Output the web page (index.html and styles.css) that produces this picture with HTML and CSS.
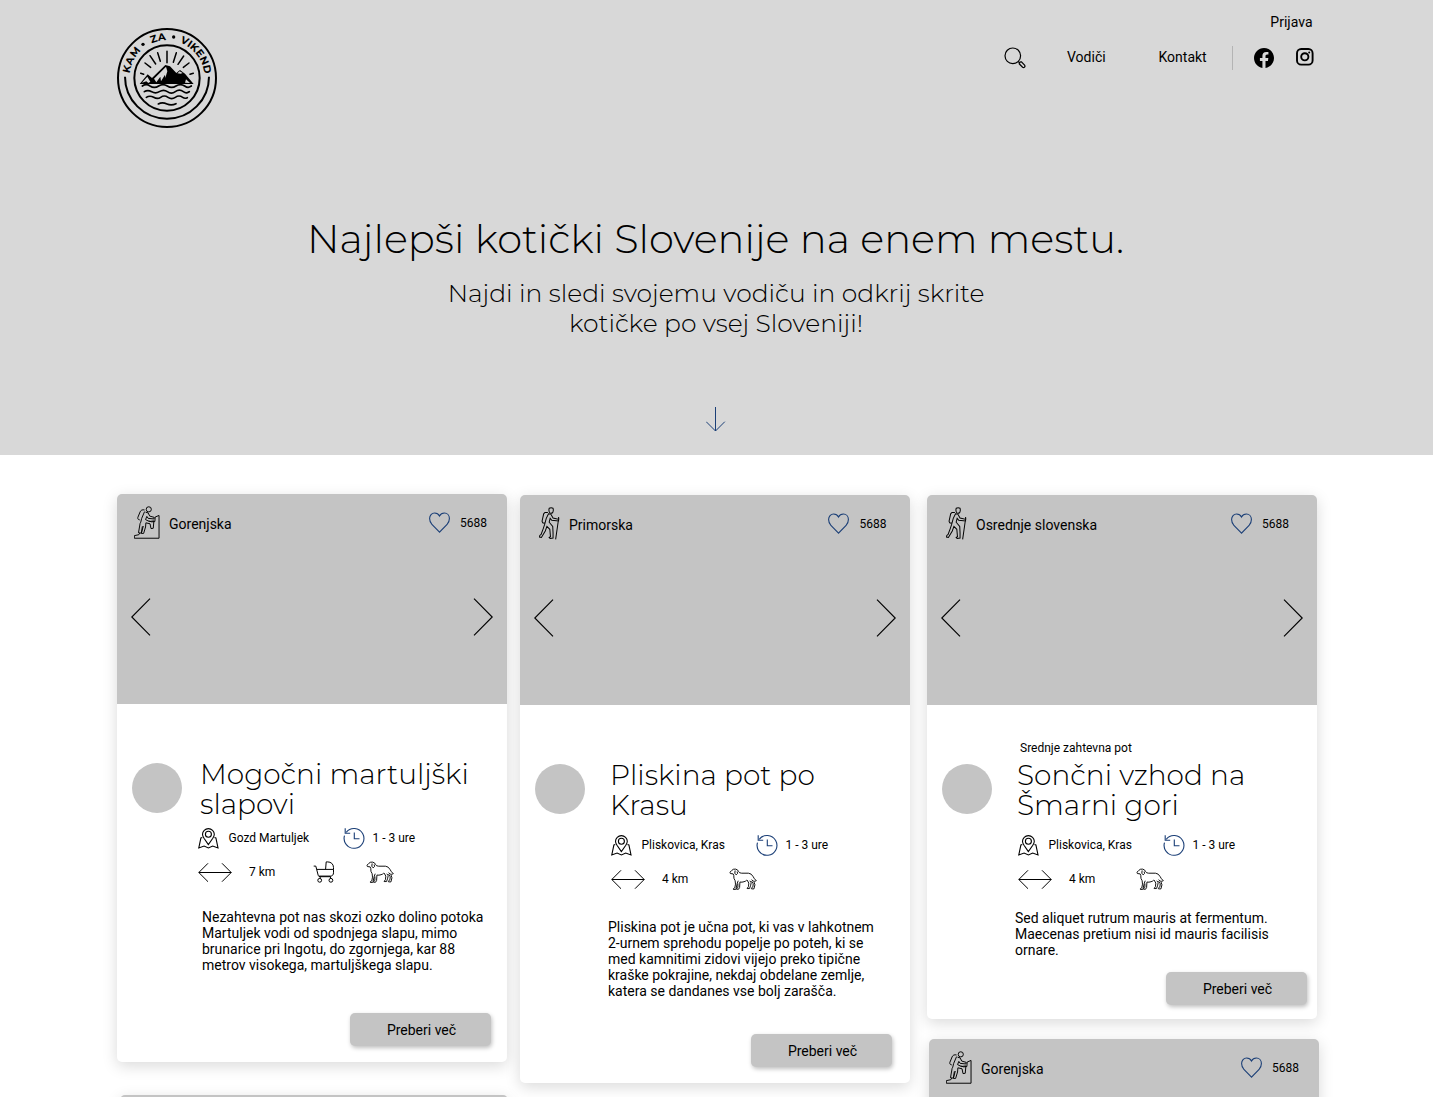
FILE: index.html
```html
<!DOCTYPE html>
<html lang="sl">
<head>
<meta charset="utf-8">
<title>Kam za vikend</title>
<link rel="stylesheet" href="styles.css">
</head>
<body>
<svg class="sprite" aria-hidden="true">
  <symbol id="climber" viewBox="71 61 81 102">
    <circle cx="117" cy="71" r="8"/>
    <path d="M104 73c-7-2-12 1-14 6l-7 17c-1 5 1 7 6 8M104 78l-9 21-3 12-2 4M107 80l8 2 5 10 14 4-1 5-18-2-4-6-4 10 12 6 14-2-2 23-7 1-3-15-13-3-1 13-6 20-7 0 3-22M90 115l-5 29 9 1 6-22M117 107l9 3 10-1 1-14 12-5v71H72v-8l14-3 3-5"/>
  </symbol>
  <symbol id="hiker" viewBox="69 64 64 102">
    <path d="M100 68q6-3 12 0 2 7-1 13-6 5-10 0-3-7-1-13z"/>
    <path d="M96 81l-9 0-4 4-5 23 2 5 8 2M98 85l7 1 7 12 17 4v5l-21-2-5-6-3 12 11 13 1 20v16l-9 1-3-3 4-2-2-23-9-9-5 14-12 20-6-1 1-5 4-3 7-19 4-12 5-19zM129 95l1 8M128 108l-8 56"/>
  </symbol>
  <symbol id="heart" viewBox="0 0 21 21">
    <path d="M10.500 20.100 2.900 12.400C1.200 10.600.6 9 .6 6.600.6 3.300 2.800 1 5.600 1c2.300 0 4 1.300 4.900 3C11.400 2.300 13.100 1 15.400 1c2.800 0 5 2.300 5 5.600 0 2.400-.6 4-2.300 5.800z"/>
  </symbol>
  <symbol id="prev" viewBox="0 0 20 38"><path d="M19 .6 .8 19 19 37.400"/></symbol>
  <symbol id="next" viewBox="0 0 20 38"><path d="M1 .6 19.200 19 1 37.400"/></symbol>
  <symbol id="pin" viewBox="0 0 21 21">
    <path d="M10.400 16.600 6 10.300C4.900 8.600 4.500 7.400 4.500 6.300A5.900 5.700 0 0 1 16.300 6.300c0 1.100-.4 2.300-1.500 4z"/>
    <circle cx="10.400" cy="6.200" r="3"/>
    <path d="M4.300 9.500 2.900 10 .8 20l5.300-1.900 4.300 1.900 4.300-1.900L20 20l-2.100-10-1.400-.5"/>
  </symbol>
  <symbol id="clock" viewBox="0 0 22 22">
    <path d="M3.200 5.300A9.900 9.900 0 1 1 1.500 8.600M1.100 11.500A9.900 9.900 0 0 0 5 19.200"/>
    <path d="M2.200 1.200v5h5M11.300 5.500v6.300h5.200"/>
  </symbol>
  <symbol id="distance" viewBox="0 0 34 20"><path d="M.8 10.500h32.400M10 1.300.8 10.500l9.200 9.200M24 1.300l9.200 9.200L24 19.700"/></symbol>
  <symbol id="stroller" viewBox="0 0 22 22">
    <path d="M.7 5.100h2.100l2.400 9.200c.3.900.9 1.400 1.900 1.400h10.700M4 8.400h16.500V6.500c0-3.500-2.600-5.600-5.800-5.600h-1.500L12.600 8.200M20.500 8.400v3.400c0 2-1.200 3.300-3 3.300H5.800M7.500 15.700l-.8 2M17.200 15.700l.8 2"/>
    <circle cx="6.700" cy="19.300" r="1.900"/><circle cx="17.900" cy="19.300" r="1.900"/>
  </symbol>
  <symbol id="dog" viewBox="769 334 82 64">
    <path d="M772 346l5-5q4-5 11-4 7 1 9 7 2 5 9 5l20 0q9 1 13 9 4 8 10 13-5 3-9 1l-5-4M772 346l1 4 8 1 2 4q-1 10 4 16l1 10-2 11-4 2 0 3 6 0 2-4 3-14 3-8M795 379l0 12-4 3 0 2 6 0 3-5 1-16q6 1 12-1 5-1 8-5M822 369l5 9-1 10-4 6 7 0 3-8 2-9-4-6M835 372l5 8-1 9-5 4 1 2 7 0 3-12-3-9"/>
    <path d="M787 341l-1 8 4 5 4-4-1-6"/>
  </symbol>
</svg>

<header class="hero">
  <div class="topbar">
    <a class="logo" aria-label="Kam za vikend">
      <svg viewBox="21 24 300 300" width="100" height="100">
        <g fill="none" stroke="#000" stroke-width="6">
          <circle cx="171" cy="174" r="147"/>
          <circle cx="171" cy="174" r="98"/>
          <path d="M45 170a126 126 0 1 0 252 0"/>
        </g>
        <path id="ring" d="M58.600 164.200A112.800 112.800 0 0 1 283.400 164.200" fill="none"/>
        <g class="logo-text">
          <text><textPath href="#ring" startOffset="4" textLength="78">KAM</textPath></text>
          <text><textPath href="#ring" startOffset="120" textLength="45">ZA</textPath></text>
          <text><textPath href="#ring" startOffset="206" textLength="127">VIKEND</textPath></text>
        </g>
        <circle cx="99" cy="73" r="5"/><circle cx="191" cy="51" r="5"/>
        <g fill="none" stroke="#000" stroke-width="4.500" stroke-linecap="round">
          <path d="M92 160l9 3M105 129l17 13M120 107l17 25M143 98l8 26M171 94v34M199 98l-9 29M221 108l-17 25M237 129l-17 13M250 160l-10 3"/>
          <path stroke-width="5" d="M97 198c9-6 16-5 23 0 9 6 17 6 26 0s17-6 26 0 17 6 26 0 17-6 26 0 12 5 20 0M103 215c9-6 15-4 22 0 9 6 15 5 23 0s16-6 24 0 16 6 24 0 16-6 24 0 11 4 18 0M109 232c8-5 15-4 22 0s14 5 21 0 15-5 22 0 15 5 22 0 15-5 22 0 9 3 14 1M145 252c9-5 17-4 26 0s17 4 27-1"/>
        </g>
        <path d="M89 192l24-29 13 11 40-39 14 4 19 20 11-9 15 11 26 31z"/>
        <path d="M112 170l-16 18 13-4 6 5 6-4-5-8zM168 140l-36 36 7 11 12-17 2 14 12-20 1 10 6-20zM209 154l-7 6 10 1 6-2zM228 178l12 11-15-1z" fill="#d8d8d8"/>
      </svg>
    </a>
    <nav class="nav">
      <a class="login">Prijava</a>
      <div class="nav-row">
        <svg class="search" viewBox="0 0 22 22" width="22" height="22"><circle cx="8.800" cy="8.800" r="7.800"/><path d="M14.300 14.500l1.300 1.300M15.700 15.900q.2-1.400 1.700-1l3.200 3.300c1 1.300-.5 3-2 2l-3.200-3.200q-.5-.6.300-1.100z"/></svg>
        <a class="guides">Vodiči</a>
        <a class="contact">Kontakt</a>
        <span class="divider"></span>
        <svg class="facebook" viewBox="0 0 24 24" width="20" height="20"><path d="M24 12.070C24 5.400 18.600 0 12 0S0 5.400 0 12.070C0 18.100 4.400 23.100 10.100 24v-8.400H7.100v-3.500h3V9.400c0-3 1.800-4.700 4.500-4.700 1.300 0 2.700.2 2.700.2v3h-1.500c-1.500 0-2 .9-2 1.900v2.300h3.400l-.5 3.500h-2.900V24C19.600 23.100 24 18.100 24 12.070z"/></svg>
        <svg class="instagram" viewBox="0 0 18 18" width="18" height="18"><rect x="1" y="1" width="15.600" height="15.600" rx="4.200"/><circle cx="8.800" cy="8.800" r="3.600"/><circle class="dot" cx="13.200" cy="4.500" r="1"/></svg>
      </div>
    </nav>
  </div>
  <h1>Najlepši kotički Slovenije na enem mestu.</h1>
  <p class="lead">Najdi in sledi svojemu vodiču in odkrij skrite<br>kotičke po vsej Sloveniji!</p>
  <svg class="down" viewBox="0 0 20 25" width="20" height="25"><path d="M9.500 0v24M.2 14.700 9.500 24l9.300-9.300"/></svg>
</header>

<main class="columns">
  <div class="column first">
    <article class="card">
      <div class="media">
        <div class="media-top"><svg class="climber"><use href="#climber"/></svg><span class="region">Gorenjska</span><svg class="heart"><use href="#heart"/></svg><span class="likes">5688</span></div>
        <div class="arrows"><svg><use href="#prev"/></svg><svg><use href="#next"/></svg></div>
      </div>
      <div class="body">
        <div class="avatar"></div>
        <div class="content">
          <h2>Mogočni martuljški<br>slapovi</h2>
          <div class="meta"><div class="place"><svg class="i-pin"><use href="#pin"/></svg><span>Gozd Martuljek</span></div><svg class="i-clock"><use href="#clock"/></svg><span>1 - 3 ure</span></div>
          <div class="meta second"><div class="length"><svg class="i-distance"><use href="#distance"/></svg><span>7 km</span></div><svg class="i-stroller"><use href="#stroller"/></svg><svg class="i-dog"><use href="#dog"/></svg></div>
          <p class="text">Nezahtevna pot nas skozi ozko dolino potoka<br>Martuljek vodi od spodnjega slapu, mimo<br>brunarice pri Ingotu, do zgornjega, kar 88<br>metrov visokega, martuljškega slapu.</p>
        </div>
      </div>
      <button>Preberi več</button>
    </article>
    <article class="card next-card"><div class="media"></div></article>
  </div>

  <div class="column middle">
    <article class="card tall">
      <div class="media">
        <div class="media-top"><svg class="hiker"><use href="#hiker"/></svg><span class="region">Primorska</span><svg class="heart"><use href="#heart"/></svg><span class="likes">5688</span></div>
        <div class="arrows"><svg><use href="#prev"/></svg><svg><use href="#next"/></svg></div>
      </div>
      <div class="body">
        <div class="avatar"></div>
        <div class="content">
          <h2>Pliskina pot po<br>Krasu</h2>
          <div class="meta"><div class="place"><svg class="i-pin"><use href="#pin"/></svg><span>Pliskovica, Kras</span></div><svg class="i-clock"><use href="#clock"/></svg><span>1 - 3 ure</span></div>
          <div class="meta second"><div class="length"><svg class="i-distance"><use href="#distance"/></svg><span>4 km</span></div><svg class="i-dog"><use href="#dog"/></svg></div>
          <p class="text">Pliskina pot je učna pot, ki vas v lahkotnem<br>2-urnem sprehodu popelje po poteh, ki se<br>med kamnitimi zidovi vijejo preko tipične<br>kraške pokrajine, nekdaj obdelane zemlje,<br>katera se dandanes vse bolj zarašča.</p>
        </div>
      </div>
      <button>Preberi več</button>
    </article>
  </div>

  <div class="column last">
    <article class="card compact">
      <div class="media">
        <div class="media-top"><svg class="hiker"><use href="#hiker"/></svg><span class="region">Osrednje slovenska</span><svg class="heart"><use href="#heart"/></svg><span class="likes">5688</span></div>
        <div class="arrows"><svg><use href="#prev"/></svg><svg><use href="#next"/></svg></div>
      </div>
      <div class="body">
        <div class="avatar"></div>
        <div class="content">
          <span class="level">Srednje zahtevna pot</span>
          <h2>Sončni vzhod na<br>Šmarni gori</h2>
          <div class="meta"><div class="place"><svg class="i-pin"><use href="#pin"/></svg><span>Pliskovica, Kras</span></div><svg class="i-clock"><use href="#clock"/></svg><span>1 - 3 ure</span></div>
          <div class="meta second"><div class="length"><svg class="i-distance"><use href="#distance"/></svg><span>4 km</span></div><svg class="i-dog"><use href="#dog"/></svg></div>
          <p class="text">Sed aliquet rutrum mauris at fermentum.<br>Maecenas pretium nisi id mauris facilisis<br>ornare.</p>
        </div>
      </div>
      <button>Preberi več</button>
    </article>
    <article class="card next-card">
      <div class="media">
        <div class="media-top"><svg class="climber"><use href="#climber"/></svg><span class="region">Gorenjska</span><svg class="heart"><use href="#heart"/></svg><span class="likes">5688</span></div>
      </div>
    </article>
  </div>
</main>
</body>
</html>
```
FILE: styles.css
```css
* { box-sizing: border-box; }
body { margin: 0; background: #fff; color: #000; font-family: Roboto, "Liberation Sans", sans-serif; font-size: 14px; line-height: 16px; }
h1, h2, p { margin: 0; }
svg { display: block; flex: none; fill: none; stroke: #000; }
.sprite { position: absolute; width: 0; height: 0; }

/* Hero */
.hero { height: 455px; background: #d8d8d8; display: flex; flex-direction: column; align-items: center; }
.topbar { width: 100%; height: 215px; flex: none; padding: 0 120px 0 117px; display: flex; justify-content: space-between; align-items: flex-start; }
.logo { margin-top: 28px; }
.logo svg { fill: #000; stroke: none; }
.logo-text { font-family: Montserrat, Lato, sans-serif; font-weight: 700; font-size: 31px; }
.nav { display: flex; flex-direction: column; align-items: flex-end; padding-top: 14px; }
.login { margin-right: .5px; }
.nav-row { display: flex; align-items: center; height: 24px; margin-top: 16px; }
.search { margin-right: 41px; stroke-width: 1.200; }
.guides { width: 91.500px; margin-top: -2px; }
.contact { width: 73.500px; margin-top: -2px; }
.divider { width: 1px; height: 24px; background: #b4b4b4; margin-right: 21px; }
.facebook { fill: #000; stroke: none; margin: -1px 22px 0 0; }
.instagram { stroke-width: 1.900; margin: -2px -1px 0 0; }
.instagram .dot { fill: #000; stroke: none; }
h1 { font-family: Montserrat, Inter, sans-serif; font-weight: 300; font-size: 40px; line-height: 48px; white-space: nowrap; margin-right: 2px; }
.lead { margin: 15px 1px 0 0; font-family: Montserrat, Inter, sans-serif; font-weight: 300; font-size: 25px; line-height: 30px; text-align: center; white-space: nowrap; }
.down { margin: 69px 1px 0 0; stroke: #1b3f77; stroke-width: 1; }

/* Card columns */
.columns { display: flex; align-items: flex-start; height: 642px; overflow: hidden; padding: 39px 0 0 117px; }
.column { width: 390px; flex: none; }
.middle { margin: 1px 17px 0 13px; }
.last { margin-top: 1px; }
.card { display: flex; flex-direction: column; height: 568px; border-radius: 5px; background: #fff; box-shadow: 0 4px 15px rgba(0, 0, 0, .15); }
.tall { height: 588px; }
.compact { height: 524px; }
.media { height: 210px; flex: none; background: #c4c4c4; border-radius: 5px 5px 0 0; padding-top: 12px; }
.media-top { display: flex; align-items: center; height: 33px; padding: 0 20px 0 17px; }
.climber { width: 26px; height: 33px; stroke-width: 3; }
.hiker { width: 21px; height: 33px; stroke-width: 3.100; }
.region { margin: 3px auto 0 9px; }
.heart { width: 21px; height: 21px; stroke: #1b3f77; stroke-width: 1.100; margin: -1px 10.500px 0 0; }
.likes { font-size: 12px; margin-top: 1px; width: 27px; }
.tall .media-top { padding-left: 18.500px; padding-right: 23.500px; }
.compact .media-top { padding-left: 18.500px; padding-right: 28px; }
.tall .region, .compact .region { margin-left: 9.500px; }
.arrows { display: flex; justify-content: space-between; padding: 58.500px 14px 0; }
.arrows svg { width: 20px; height: 38px; stroke-width: 1.150; }
.body { display: flex; flex: 1; padding-left: 15px; }
.avatar { width: 50px; height: 50px; flex: none; border-radius: 50%; background: #c4c4c4; margin-top: 59px; }
.content { padding: 55px 0 0 16px; }
.tall .content, .compact .content { padding-left: 26px; }
.compact .content { padding-top: 35px; }
.level { display: block; font-size: 12px; margin: 0 0 4px 2px; }
h2 { font-family: Montserrat, Inter, sans-serif; font-weight: 300; font-size: 28px; line-height: 30px; white-space: nowrap; padding-left: 2px; }
.tall h2, .compact h2 { margin-left: -1px; padding-left: 0; }
.meta { display: flex; align-items: center; height: 22px; margin-top: 8px; font-size: 12px; }
.tall .meta, .compact .meta { margin-top: 14px; }
.content .meta.second { margin-top: 12px; }
.place { display: flex; align-items: center; width: 145px; gap: 9.500px; }
.length { display: flex; align-items: center; width: 115px; gap: 17px; }
.tall .length, .compact .length { width: 118px; }
.i-pin { width: 21px; height: 21px; stroke-width: 1.100; }
.i-clock { width: 22px; height: 22px; stroke: #1b3f77; stroke-width: 1.100; margin-right: 7.500px; }
.i-distance { width: 34px; height: 20px; }
.i-stroller { width: 22px; height: 22px; margin-right: 31px; }
.i-dog { width: 28px; height: 22px; stroke-width: 2.700; }
.text { margin: 26px 0 0 4px; white-space: nowrap; }
.tall .text { margin: 29px 0 0 -3px; }
.compact .text { margin: 20px 0 0 -3px; }
button { align-self: flex-end; width: 141px; height: 33px; margin: 0 16px 16px 0; padding: 0 0 0 2px; border: 0; border-radius: 5px; background: #c4c4c4; box-shadow: 1px 2px 4px rgba(0, 0, 0, .25); font: inherit; color: #000; }
.tall button { margin-right: 18px; }
.compact button { margin: 0 10px 14px 0; }
.next-card { margin-top: 20px; }
.last .next-card { margin-left: 2px; width: 390px; }
.first .next-card { margin-top: 33px; margin-left: 3px; width: 388px; }
```
